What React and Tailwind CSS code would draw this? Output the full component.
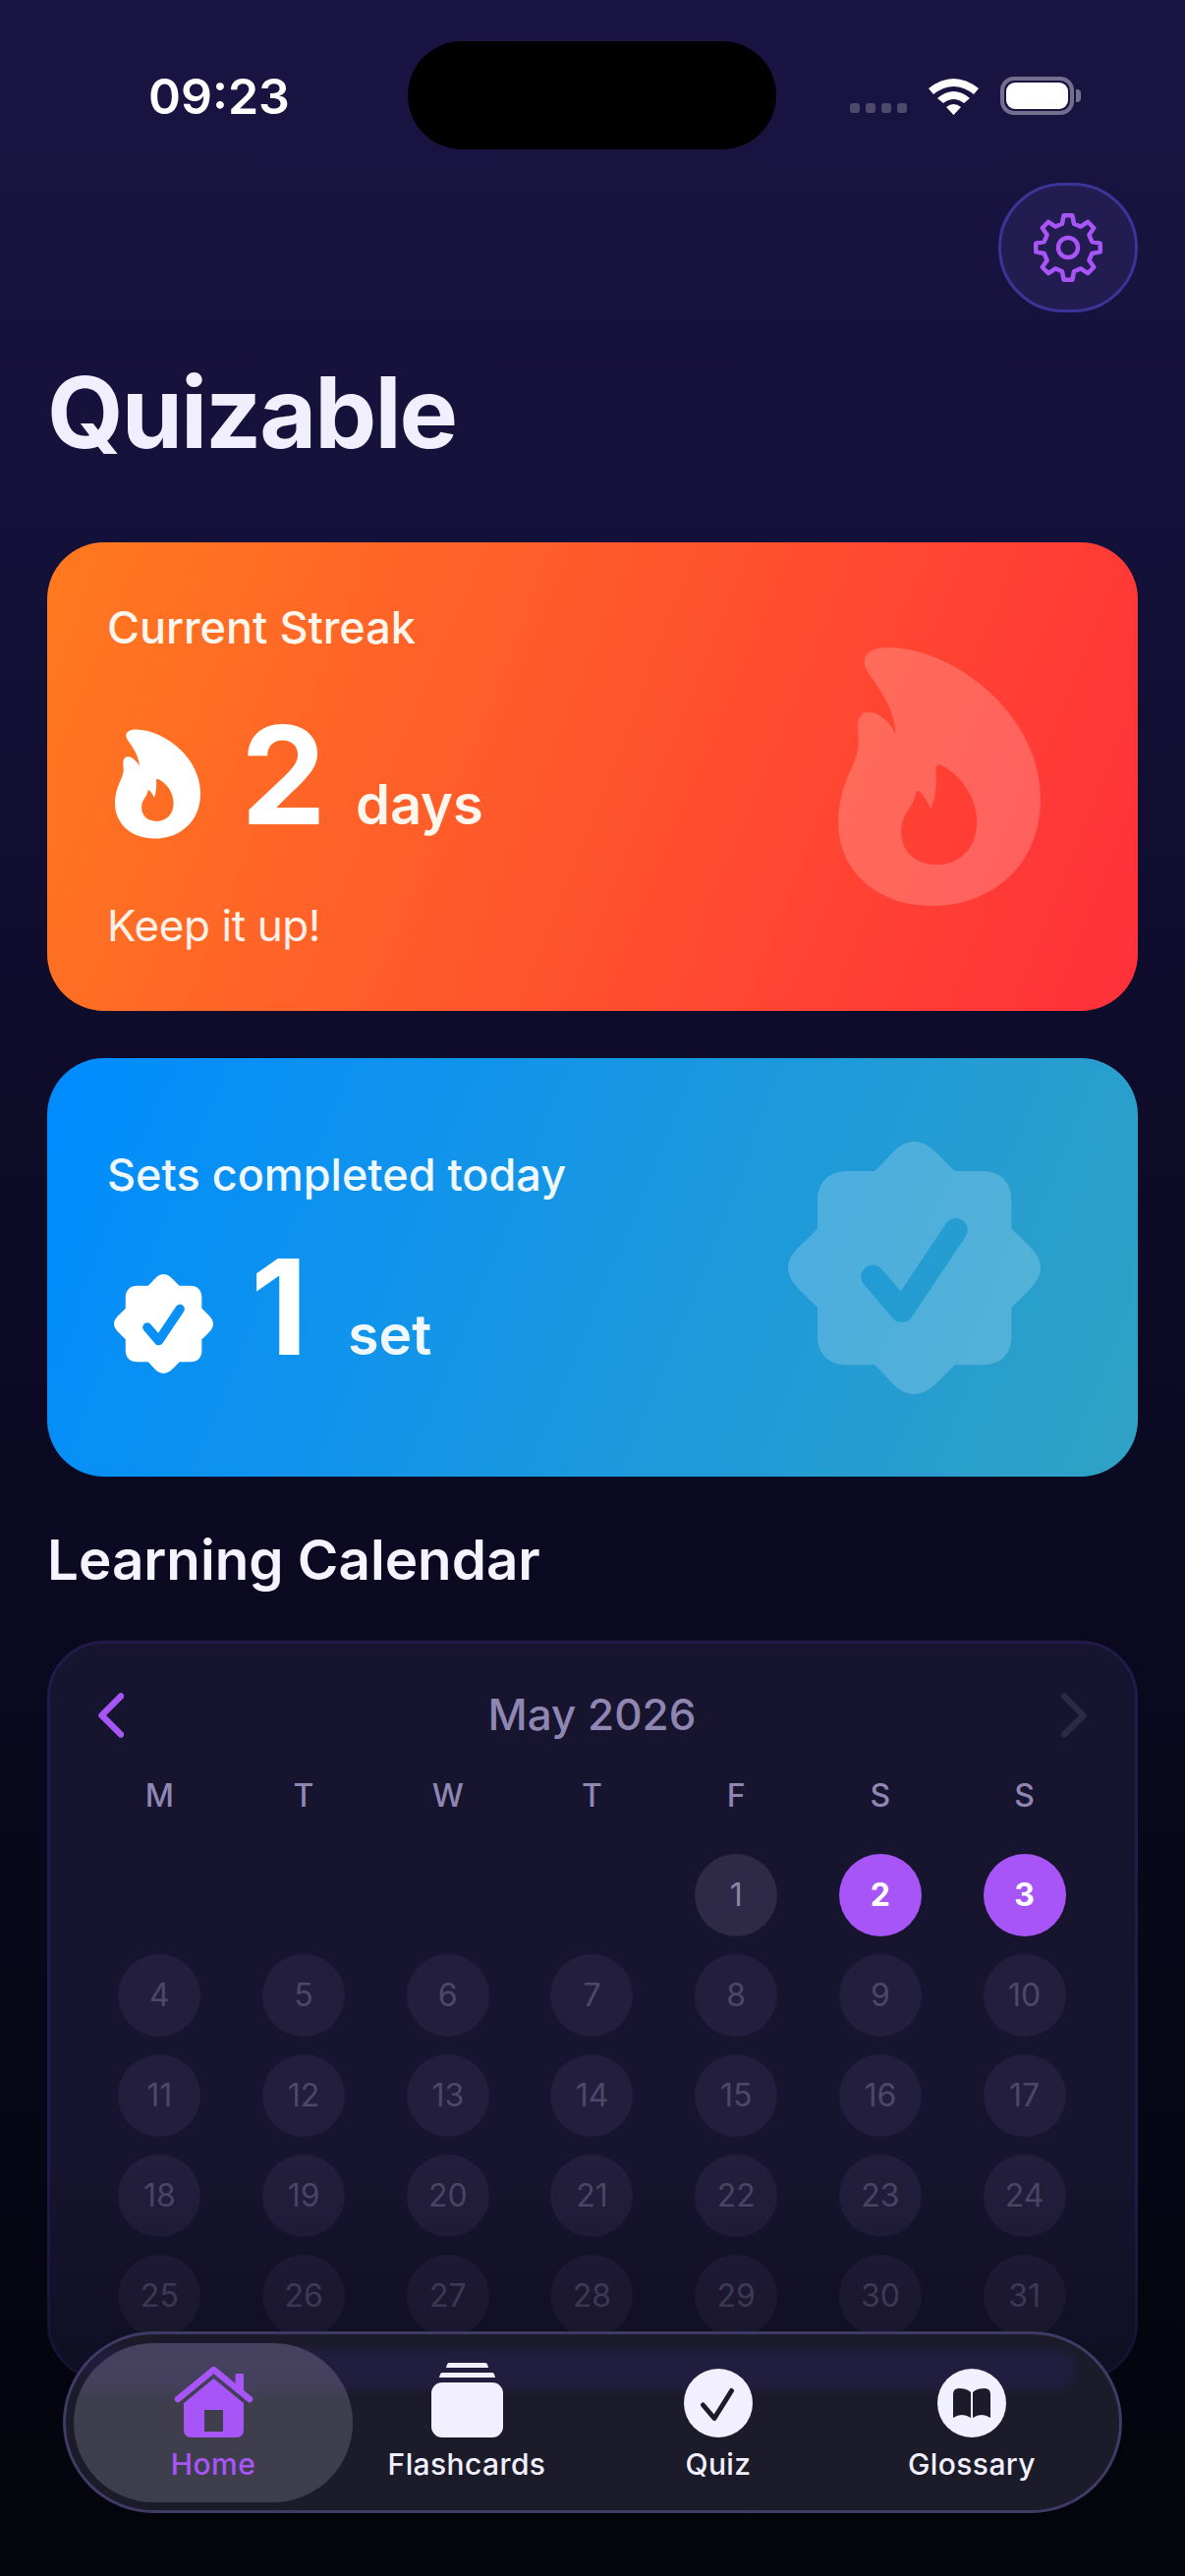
import React from "react";

const FLAME =
  "M180 100C180 70 215 58 250 58C450 58 716 260 716 520C716 720 570 845 385 845C220 845 100 740 100 590C100 510 130 450 145 415C160 380 165 350 160 320C155 280 165 255 195 255C225 255 260 290 275 322C275 260 235 195 195 140C185 128 180 115 180 100ZM397 425C400 412 408 415 415 418C470 445 522 510 522 590C522 670 470 720 400 720C335 720 292 680 292 620C292 570 320 550 330 525C335 510 337 495 342 495C352 495 375 530 382 550C395 520 402 480 397 425Z";

const BADGE =
  "M450 65C500 65 530 115 575 155L660 155C715 155 748 190 748 245L748 330C790 375 837 405 837 450C837 495 790 530 748 572L748 660C748 715 715 748 660 748L575 748C530 790 500 837 450 837C400 837 375 790 330 748L245 748C190 748 155 715 155 660L155 572C115 530 65 495 65 450C65 405 115 375 155 330L155 245C155 190 190 155 245 155L330 155C375 115 400 65 450 65Z";

function Flame({ className }) {
  return (
    <svg viewBox="100 58 616 787" className={className} fill="currentColor">
      <path d={FLAME} fillRule="evenodd" />
    </svg>
  );
}

function Badge({ className, id }) {
  return (
    <svg viewBox="65 65 772 772" className={className} fill="currentColor">
      <mask id={id} maskUnits="userSpaceOnUse" x="0" y="0" width="900" height="900">
        <rect width="900" height="900" fill="#fff" />
        <path d="M324 478L413 582L578 335" fill="none" stroke="#000" strokeWidth="72" strokeLinecap="round" strokeLinejoin="round" />
      </mask>
      <path d={BADGE} mask={`url(#${id})`} />
    </svg>
  );
}

function gearPath() {
  const cx = 40, cy = 40, n = 8, ro = 33, ri = 25;
  const pts = [];
  for (let i = 0; i < n; i++) {
    const a = (i * 2 * Math.PI) / n - Math.PI / 2;
    const d = Math.PI / n;
    [[-d * 0.62, ri], [-d * 0.34, ro], [d * 0.34, ro], [d * 0.62, ri]].forEach(([o, r]) => {
      pts.push(`${(cx + r * Math.cos(a + o)).toFixed(2)} ${(cy + r * Math.sin(a + o)).toFixed(2)}`);
    });
  }
  return "M" + pts.join("L") + "Z";
}

function Gear() {
  return (
    <svg viewBox="0 0 80 80" className="w-[80px] h-[80px] text-[#a855f7]" fill="none" stroke="currentColor" strokeWidth="4.5" strokeLinejoin="round">
      <path d={gearPath()} />
      <circle cx="40" cy="40" r="10" />
    </svg>
  );
}

function Wifi() {
  return (
    <svg viewBox="0 0 51 37" className="w-[51px] h-[37px] text-white" fill="currentColor">
      <path d="M0 10Q25.5 -10 51 10L46 16Q25.5 0 5 16Z" />
      <path d="M9 20Q25.5 6 42 20L36 25Q25.5 17 15 25Z" />
      <path d="M18 29Q25.5 23 33 29L25.5 37Z" />
    </svg>
  );
}

function Chevron({ dir, className }) {
  return (
    <svg viewBox="0 0 26 46" className={className} fill="none" stroke="currentColor" strokeWidth="6.5" strokeLinecap="round" strokeLinejoin="round">
      <path d={dir === "left" ? "M23 3.5L3.5 23L23 42.5" : "M3 3.5L22.5 23L3 42.5"} />
    </svg>
  );
}

function Day({ n, kind }) {
  const cls =
    kind === "on"
      ? "bg-[#a855f7] text-white font-bold"
      : kind === "done"
        ? "bg-[#2d2946] text-[#8a85a6]"
        : "bg-[#231e3d] text-[#4d4869]";
  return (
    <div className="flex justify-center">
      {n ? (
        <div className={`w-[84px] h-[84px] rounded-full flex items-center justify-center text-[32px] ${cls}`}>{n}</div>
      ) : (
        <div className="w-[84px] h-[84px]" />
      )}
    </div>
  );
}

const DAYS = [null, null, null, null, 1, 2, 3];
for (let i = 4; i <= 31; i++) DAYS.push(i);

function HomeIcon() {
  return (
    <svg viewBox="0 0 81 72" className="w-[81px] h-[72px] text-[#a855f7]" fill="currentColor">
      <rect x="62.5" y="7" width="8.5" height="18" rx="1.5" />
      <path d="M4 33L40.5 3L77 33" fill="none" stroke="currentColor" strokeWidth="6.5" strokeLinecap="round" strokeLinejoin="round" />
      <path
        fillRule="evenodd"
        d="M40.5 12L71 37V64Q71 72 63 72H18Q10 72 10 64V37ZM31 44V66H50V44Z"
      />
    </svg>
  );
}

function CardsIcon() {
  return (
    <svg viewBox="0 0 73 76" className="w-[73px] h-[76px] text-[#f2f0ff]" fill="currentColor">
      <path d="M18 0H55Q57 0 58 5H15Q16 0 18 0Z" />
      <path d="M11 10H62Q64 10 65 15H8Q9 10 11 10Z" />
      <rect x="0" y="20" width="73" height="56" rx="11" />
    </svg>
  );
}

function QuizIcon() {
  return (
    <svg viewBox="0 0 70 70" className="w-[70px] h-[70px]">
      <circle cx="35" cy="35" r="35" fill="#f2f0ff" />
      <path d="M19.5 37L31 50.5L48.5 22.5" fill="none" stroke="#1c1b29" strokeWidth="5" strokeLinecap="round" strokeLinejoin="round" />
    </svg>
  );
}

function BookIcon() {
  return (
    <svg viewBox="0 0 70 70" className="w-[70px] h-[70px]">
      <circle cx="35" cy="35" r="35" fill="#f2f0ff" />
      <path d="M16 50V26Q16 20 22 20Q30 20 34 24V50Q25 44 16 50Z" fill="#1c1b29" />
      <path d="M54 50V26Q54 20 48 20Q40 20 36 24V50Q45 44 54 50Z" fill="#1c1b29" />
    </svg>
  );
}

function NavItem({ w, icon, label, active }) {
  return (
    <div
      className={`relative h-[162px] flex flex-col items-center ${w} ${
        active ? "rounded-[81px] bg-[linear-gradient(to_bottom,#46415f_0%,#44405c_26%,#3f3e4d_36%,#3e3d4c_100%)] text-[#a855f7]" : "text-[#f2f0ff]"
      }`}
    >
      <div className="h-[96px] flex items-end justify-center">{icon}</div>
      <div className="mt-[9px] text-[30px] leading-[36px] font-medium tracking-[0.4px]">{label}</div>
    </div>
  );
}

export default function App() {
  return (
    <div
      className="relative w-[1206px] h-[2622px] overflow-hidden bg-[linear-gradient(to_bottom,#1a1442_0%,#14113a_20%,#0e0c2a_41%,#0a0920_63%,#04040c_100%)] text-white"
      style={{ fontFamily: "Inter, 'Noto Sans', sans-serif" }}
    >
      {/* status bar */}
      <div className="flex items-start pt-[42px] h-[186px]">
        <div className="ml-[151px] w-[264px] mt-[28px] text-[50px] leading-[56px] font-semibold">09:23</div>
        <div className="w-[375px] h-[110px] rounded-[55px] bg-black" />
        <div className="ml-[75px] mt-[36px] flex items-end">
          <div className="flex gap-[6px] mb-[2px]">
            <div className="w-[10px] h-[10px] rounded-[3px] bg-[#4e4a6b]" />
            <div className="w-[10px] h-[10px] rounded-[3px] bg-[#4e4a6b]" />
            <div className="w-[10px] h-[10px] rounded-[3px] bg-[#4e4a6b]" />
            <div className="w-[10px] h-[10px] rounded-[3px] bg-[#4e4a6b]" />
          </div>
          <div className="ml-[22px]"><Wifi /></div>
          <div className="ml-[22px] w-[75px] h-[39px] rounded-[14px] border-[4px] border-[#746f8f] p-[2px]">
            <div className="w-full h-full rounded-[9px] bg-white" />
          </div>
          <div className="ml-[2px] mb-[13px] w-[5px] h-[13px] rounded-r-[4px] bg-[#746f8f]" />
        </div>
      </div>

      <div className="px-[48px]">
        <div className="flex justify-end">
          <div className="w-[142px] h-[132px] rounded-full border-[3px] border-[#3d3498] bg-[#231c50] flex items-center justify-center">
            <Gear />
          </div>
        </div>

        <h1 className="mt-[51px] text-[100px] leading-[102px] font-bold text-[#f1eefe] tracking-[-2px]">Quizable</h1>

        {/* streak card */}
        <div className="relative mt-[81px] h-[477px] rounded-[58px] pl-[61px] pt-[60px] bg-[linear-gradient(112deg,#ff7a1f_0%,#ff2f3a_100%)]">
          <div className="text-[45px] leading-[54px] font-medium text-[#fff6ee]">Current Streak</div>
          <div className="mt-[54px] flex items-start h-[138px]">
            <Flame className="mt-[22px] ml-[8px] w-[87px] h-[112px] text-white" />
            <div className="ml-[41px] flex items-baseline">
              <span className="text-[138px] leading-[138px] font-bold">2</span>
              <span className="ml-[30px] text-[56px] leading-[60px] font-semibold text-[#fff6ee]">days</span>
            </div>
          </div>
          <div className="mt-[57px] text-[44px] leading-[54px] tracking-[-0.4px] text-[#fff1e8]">Keep it up!</div>
          <Flame className="absolute left-[805px] top-[107px] w-[206px] h-[263px] text-white/20" />
        </div>

        {/* sets card */}
        <div className="relative mt-[48px] h-[426px] rounded-[58px] pl-[61px] pt-[92px] bg-[linear-gradient(112deg,#008cff_0%,#30a2c4_100%)]">
          <div className="text-[45px] leading-[54px] font-medium text-[#f0f8ff]">Sets completed today</div>
          <div className="mt-[40px] flex items-start h-[135px]">
            <Badge id="badge-small" className="mt-[34px] ml-[7px] w-[101px] h-[101px] text-white" />
            <div className="ml-[38px] flex items-baseline">
              <span className="text-[135px] leading-[135px] font-bold">1</span>
              <span className="ml-[41px] text-[57px] leading-[60px] font-semibold text-[#f0f8ff]">set</span>
            </div>
          </div>
          <Badge id="badge-large" className="absolute left-[754px] top-[85px] w-[257px] h-[257px] text-white/20" />
        </div>

        <h2 className="mt-[50px] text-[56.5px] leading-[70px] font-semibold text-[#f5f3ff]">Learning Calendar</h2>

        {/* calendar */}
        <div className="mt-[47px] h-[753px] rounded-[58px] border-[3px] border-[#221a49] bg-[#17142f] pt-[44px] pl-[38px] pr-[39px]">
          <div className="relative flex items-center justify-center h-[56px]">
            <span className="text-[44px] leading-[56px] font-medium text-[#8f87b2]">May 2026</span>
            <Chevron dir="left" className="absolute left-[11px] top-[6px] w-[26px] h-[46px] text-[#a855f7]" />
            <Chevron dir="right" className="absolute right-[10px] top-[6px] w-[26px] h-[46px] text-[#2c2846]" />
          </div>
          <div className="mt-[35px] grid grid-cols-7 text-center text-[32px] leading-[40px] font-medium text-[#8f87b2]">
            {["M", "T", "W", "T", "F", "S", "S"].map((d, i) => (
              <div key={i}>{d}</div>
            ))}
          </div>
          <div className="mt-[39px] grid grid-cols-7 gap-y-[18px]">
            {DAYS.map((n, i) => (
              <Day key={i} n={n} kind={n === 1 ? "done" : n === 2 || n === 3 ? "on" : "off"} />
            ))}
          </div>
        </div>
      </div>

      {/* bottom fade */}
      <div className="absolute left-0 right-0 top-[2200px] h-[422px] bg-gradient-to-b from-[#04040c]/0 to-[#04040c]/70 pointer-events-none" />

      {/* tab bar */}
      <div className="absolute left-[64px] top-[2373px] w-[1078px] h-[185px] rounded-[93px] border-[3px] border-[#3f3a66] bg-[#1c1b29] flex items-center pl-[8px] overflow-hidden">
        <div className="absolute left-[20px] right-[44px] top-[14px] h-[44px] rounded-[24px] bg-[#211d3e] blur-[5px]" />
        <NavItem w="w-[284px]" active icon={<HomeIcon />} label="Home" />
        <NavItem w="w-[232px]" icon={<CardsIcon />} label="Flashcards" />
        <NavItem w="w-[280px]" icon={<QuizIcon />} label="Quiz" />
        <NavItem w="w-[236px]" icon={<BookIcon />} label="Glossary" />
      </div>
    </div>
  );
}
